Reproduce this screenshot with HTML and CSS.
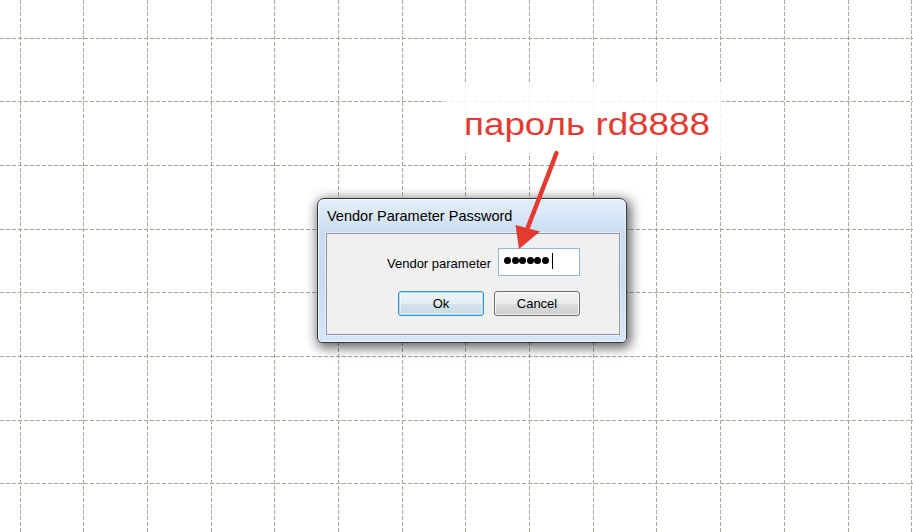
FILE: index.html
```html
<!DOCTYPE html>
<html lang="ru">
<head>
    <meta charset="UTF-8">
    <title>Vendor Parameter Password</title>
    <link rel="stylesheet" href="styles.css">
</head>
<body>
    <svg class="grid" width="913" height="532" viewBox="0 0 913 532">
        <g class="grid-lines">
            <line x1="20.5" y1="0" x2="20.5" y2="532"/>
            <line x1="83.5" y1="0" x2="83.5" y2="532"/>
            <line x1="147.5" y1="0" x2="147.5" y2="532"/>
            <line x1="211.5" y1="0" x2="211.5" y2="532"/>
            <line x1="274.5" y1="0" x2="274.5" y2="532"/>
            <line x1="338.5" y1="0" x2="338.5" y2="532"/>
            <line x1="402.5" y1="0" x2="402.5" y2="532"/>
            <line x1="465.5" y1="0" x2="465.5" y2="532"/>
            <line x1="529.5" y1="0" x2="529.5" y2="532"/>
            <line x1="593.5" y1="0" x2="593.5" y2="532"/>
            <line x1="656.5" y1="0" x2="656.5" y2="532"/>
            <line x1="720.5" y1="0" x2="720.5" y2="532"/>
            <line x1="784.5" y1="0" x2="784.5" y2="532"/>
            <line x1="848.5" y1="0" x2="848.5" y2="532"/>
            <line x1="911.5" y1="0" x2="911.5" y2="532"/>
            <line x1="0" y1="38.5" x2="913" y2="38.5"/>
            <line x1="0" y1="101.5" x2="913" y2="101.5"/>
            <line x1="0" y1="165.5" x2="913" y2="165.5"/>
            <line x1="0" y1="229.5" x2="913" y2="229.5"/>
            <line x1="0" y1="292.5" x2="913" y2="292.5"/>
            <line x1="0" y1="356.5" x2="913" y2="356.5"/>
            <line x1="0" y1="420.5" x2="913" y2="420.5"/>
            <line x1="0" y1="483.5" x2="913" y2="483.5"/>
        </g>
    </svg>

    <div class="desk">
        <div class="window">
            <div class="titlebar">Vendor Parameter Password</div>
            <div class="panel">
                <div class="field-row">
                    <span class="label">Vendor parameter</span>
                    <div class="pass">
                        <span class="dot"></span><span class="dot"></span><span class="dot"></span>
                        <span class="dot"></span><span class="dot"></span><span class="dot"></span>
                        <span class="caret"></span>
                    </div>
                </div>
                <div class="btn-row">
                    <button class="btn btn-default">Ok</button>
                    <button class="btn">Cancel</button>
                </div>
            </div>
        </div>
    </div>

    <div class="note"><span class="note-text">пароль rd8888</span></div>

    <svg class="arrow" width="60" height="110" viewBox="0 0 60 110">
        <line x1="51.5" y1="8" x2="23" y2="82" class="arrow-shaft"/>
        <polygon points="14,104 10.5,80 35,86.5" class="arrow-head"/>
    </svg>
</body>
</html>
```

FILE: styles.css
```css
body {
    margin: 0;
    width: 913px;
    height: 532px;
    background: #fff;
    font-family: "Liberation Sans", Arial, sans-serif;
    position: relative;
    overflow: hidden;
}

.grid {
    position: absolute;
    left: 0;
    top: 0;
}
.grid-lines line {
    stroke: #a9a696;
    stroke-width: 1;
    stroke-dasharray: 4 2;
    shape-rendering: crispEdges;
}

.desk {
    position: relative;
    padding: 198px 0 0 317px;
}

.window {
    width: 310px;
    height: 145px;
    box-sizing: border-box;
    border: 1px solid #33373c;
    border-radius: 7px 7px 5px 5px;
    padding: 0 6px 7px 8px;
    background: linear-gradient(to bottom, #e4eefa 0, #d9e7f7 16px, #cadcf1 36px, #c8dbf1 60%, #d6e6f7 100%);
    box-shadow: 2px 3px 12px 2px rgba(0, 0, 0, 0.6), inset 0 0 0 1px rgba(255, 255, 255, 0.65);
}

.titlebar {
    height: 33px;
    padding: 1px 0 0 1px;
    line-height: 33px;
    font-size: 14.5px;
    color: #000;
}

.panel {
    height: 102px;
    box-sizing: border-box;
    border: 1px solid #8e949b;
    background: #f0f0f0;
    box-shadow: 0 0 0 1px rgba(255, 255, 255, 0.55);
    padding: 14px 0 18px 60px;
    font-size: 13px;
    color: #000;
}

.field-row {
    display: flex;
    align-items: center;
    height: 28px;
}
.label {
    padding-top: 3px;
}
.pass {
    margin-left: 7px;
    width: 82px;
    height: 28px;
    box-sizing: border-box;
    border: 1px solid #8fb7e2;
    background: #fff;
    display: flex;
    align-items: center;
    gap: 0.6px;
    padding: 0 0 3px 5px;
}
.dot {
    width: 7px;
    height: 7px;
    border-radius: 50%;
    background: #000;
}
.caret {
    width: 1px;
    height: 16px;
    background: #000;
    margin-left: 2px;
}

.btn-row {
    display: flex;
    gap: 10px;
    margin: 15px 0 0 11px;
}
.btn {
    width: 86px;
    height: 25px;
    box-sizing: border-box;
    border: 1px solid #707070;
    border-radius: 3px;
    padding: 0;
    font-family: "Liberation Sans", Arial, sans-serif;
    font-size: 13px;
    color: #000;
    background: linear-gradient(to bottom, #f2f2f2 0, #ebebeb 50%, #dddddd 50%, #cfcfcf 100%);
    box-shadow: inset 0 0 0 1px rgba(255, 255, 255, 0.7);
}
.btn-default {
    border-color: #3c8fd0;
    background: linear-gradient(to bottom, #eef5fa 0, #e3edf4 50%, #d3e2ec 50%, #c9dae6 100%);
    box-shadow: inset 0 0 0 1px #9fe3fb, inset 0 0 0 2px rgba(255, 255, 255, 0.5);
}

.note {
    position: absolute;
    left: 445px;
    top: 84px;
    width: 277px;
    height: 69px;
    box-sizing: border-box;
    padding: 24px 0 0 19px;
    background: rgba(255, 255, 255, 0.85);
}
.note-text {
    display: inline-block;
    font-size: 32px;
    line-height: 32px;
    color: #e53a30;
    white-space: nowrap;
    transform: scaleX(1.15);
    transform-origin: left center;
}

.arrow {
    position: absolute;
    left: 505px;
    top: 145px;
}
.arrow-shaft {
    stroke: #e53a30;
    stroke-width: 4.5;
    stroke-linecap: round;
}
.arrow-head {
    fill: #e53a30;
}
```
